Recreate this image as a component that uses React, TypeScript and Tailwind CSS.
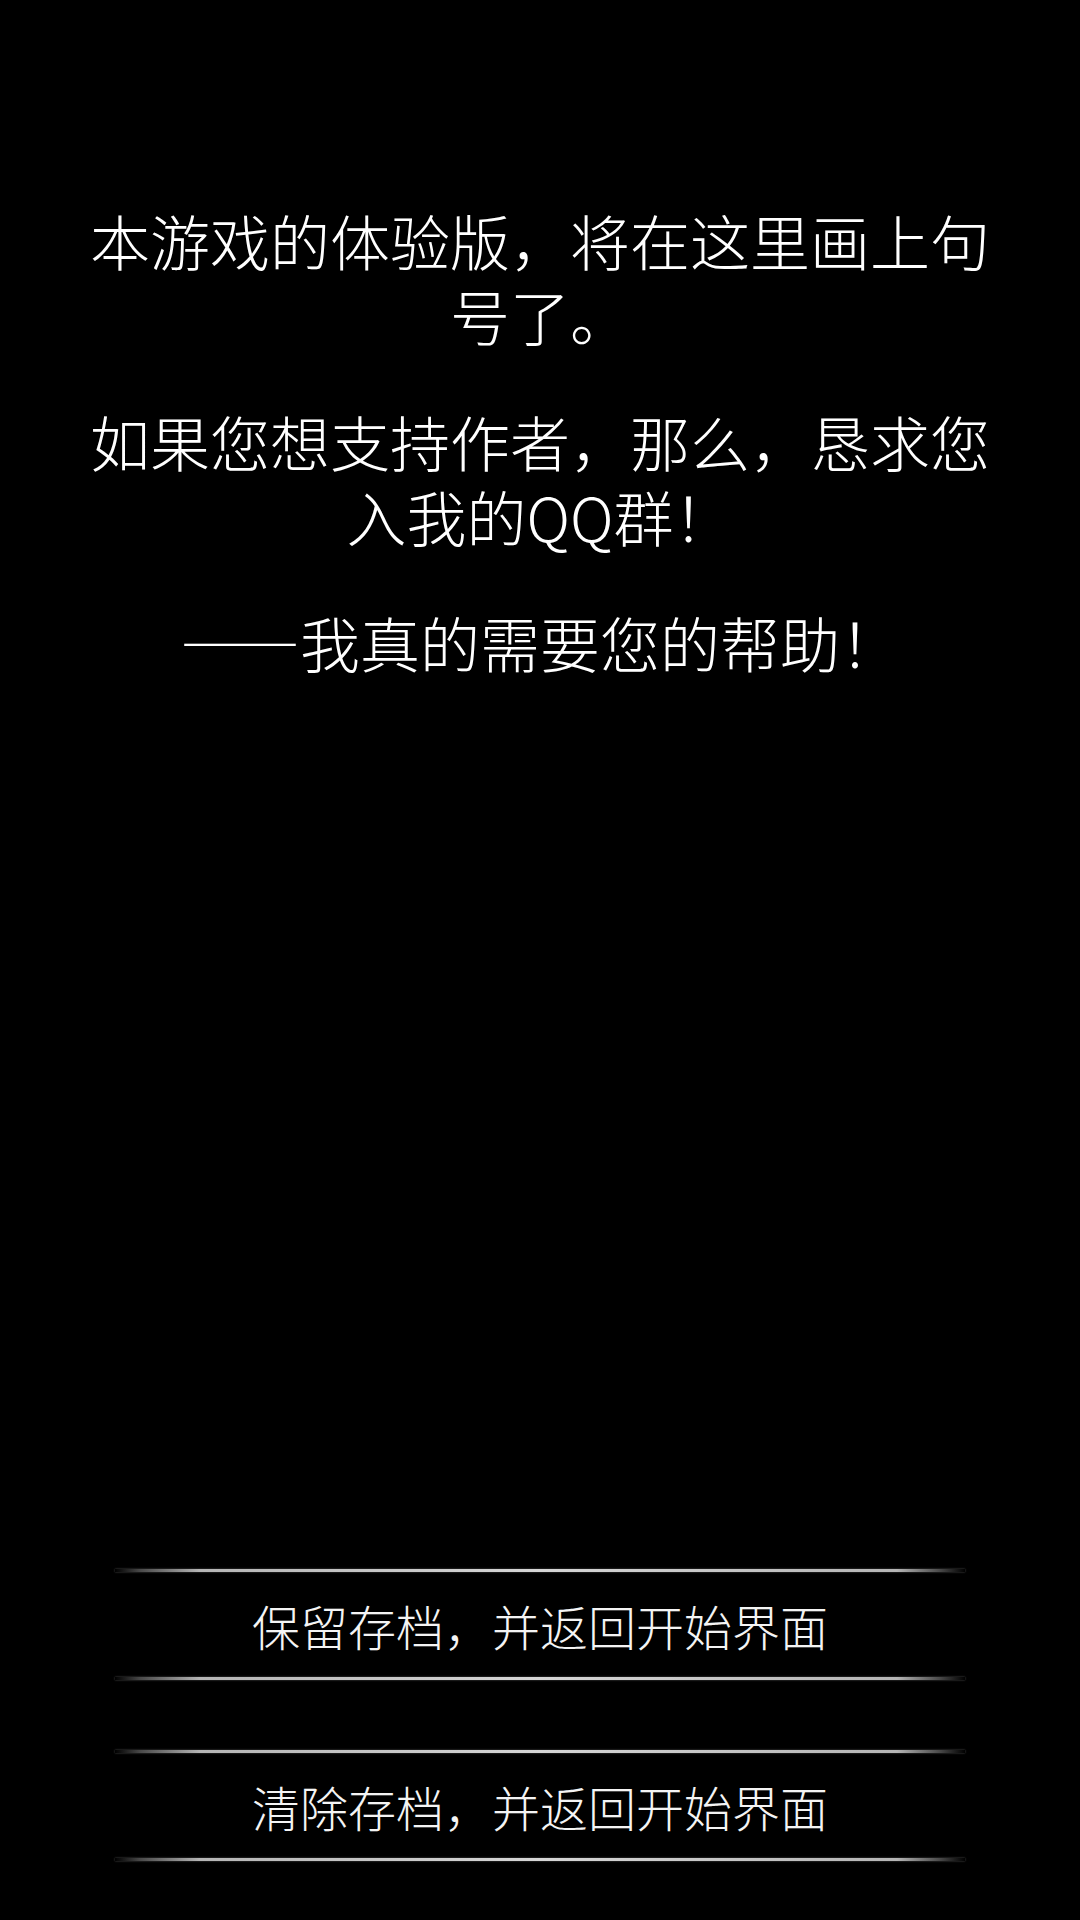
import React from 'react';

const paragraphs: string[] = [
  '本游戏的体验版，将在这里画上句号了。',
  '如果您想支持作者，那么，恳求您入我的QQ群！',
  '——我真的需要您的帮助！',
];

const buttons: string[] = ['保留存档，并返回开始界面', '清除存档，并返回开始界面'];

// thin glowing rule used above and below each menu item
const GlowLine: React.FC = () => (
  <div className="mx-auto w-[850px] h-[3px] bg-[linear-gradient(to_right,transparent,#4a4a4a_3%,#b5b5b5_10%,#d6d6d6_50%,#b5b5b5_92%,#4a4a4a_97%,transparent)] shadow-[0_0_2px_rgba(160,160,160,0.6)]" />
);

export default function App() {
  return (
    <div
      className="w-[1080px] h-[1920px] bg-black text-white flex flex-col"
      style={{ fontFamily: '"Noto Sans CJK SC", "Noto Sans", sans-serif' }}
    >
      {/* Message */}
      <div className="pt-[202px] px-[80px] flex flex-col gap-[51px] text-center text-[60px] leading-[75px] font-light">
        {paragraphs.map((p) => (
          <p key={p} lang="zh-CN">
            {p}
          </p>
        ))}
      </div>

      <div className="flex-1" />

      {/* Menu */}
      <div className="flex flex-col gap-[70px] pb-[59px]">
        {buttons.map((label) => (
          <button key={label} className="flex flex-col w-full bg-transparent">
            <GlowLine />
            <span className="h-[105px] flex items-center justify-center text-[48px] leading-none font-light text-[#f4f4f4]">
              {label}
            </span>
            <GlowLine />
          </button>
        ))}
      </div>
    </div>
  );
}
